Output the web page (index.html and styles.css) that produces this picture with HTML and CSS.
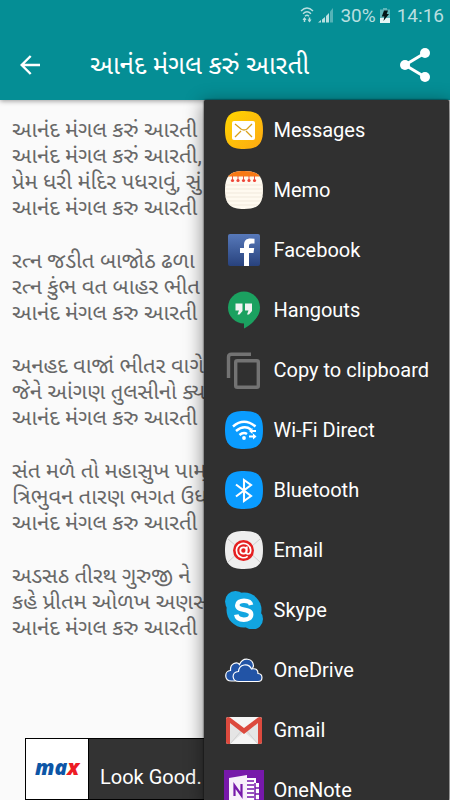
FILE: index.html
```html
<!DOCTYPE html>
<html lang="gu">
<head>
<meta charset="utf-8">
<meta name="viewport" content="width=device-width, initial-scale=1">
<title>આનંદ મંગલ કરું આરતી</title>
<link rel="stylesheet" href="styles.css">
</head>
<body>
<div class="app">
  <header class="top">
    <div class="status">
      <svg class="status-wifi" viewBox="0 0 14 18" width="14" height="18" fill="none" stroke="currentColor" stroke-width="1.4">
        <path d="M1 5Q7-.8 13 5M3 7.7Q7 4 11 7.7M5 10.2Q7 8.4 9 10.2"/>
        <path d="M4.500 16v-4M9.500 11.500v4" stroke-width="1.500"/>
        <path d="M2.500 14l2-3 2 3zM7.500 13.500l2 3 2-3z" fill="currentColor" stroke="none"/>
      </svg>
      <svg class="status-signal" viewBox="0 0 16 16" width="16" height="16">
        <path d="M0 15.500L3 13v2.500zM4 12.500l3-2.500v5.500H4zM8 9l3-3v9.500H8z" fill="currentColor"/>
        <path d="M12 4.500L15 1v14.500h-3z" fill="currentColor" opacity=".45"/>
      </svg>
      <span>30%</span>
      <svg class="status-battery" viewBox="0 0 10 15" width="10" height="15">
        <path d="M3 0h4v1.500h3V15H0V1.500h3z" fill="currentColor" opacity=".5"/>
        <path d="M0 10h10v5H0z" fill="#e5f6f5"/>
        <path d="M4 2.500h4L6.700 6H9l-5.500 7L4.400 8.500H1.800z" fill="#041516"/>
      </svg>
      <span>14:16</span>
    </div>
    <div class="toolbar">
      <button class="icon-button" type="button" aria-label="Back">
        <svg viewBox="0 0 20 20" width="20" height="20" fill="none" stroke="currentColor" stroke-width="2.400"><path d="M20 10H2M10.700 1L1.700 10l9 9"/></svg>
      </button>
      <h1>આનંદ મંગલ કરું આરતી</h1>
      <button class="icon-button" type="button" aria-label="Share">
        <svg viewBox="0 0 30 34" width="30" height="34"><path d="M25 5L5 17l20 12" fill="none" stroke="currentColor" stroke-width="3"/><g fill="currentColor"><circle cx="25" cy="5" r="5"/><circle cx="5" cy="17" r="5"/><circle cx="25" cy="29" r="5"/></g></svg>
      </button>
    </div>
  </header>
  <main class="lyrics">
    <p>આનંદ મંગલ કરું આરતી<br>આનંદ મંગલ કરું આરતી,<br>પ્રેમ ધરી મંદિર પધરાવું, સું<br>આનંદ મંગલ કરુ આરતી</p>
    <p>રત્ન જડીત બાજોઠ ઢળા<br>રત્ન કુંભ વત બાહર ભીત<br>આનંદ મંગલ કરુ આરતી</p>
    <p>અનહદ વાજાં ભીતર વાગે<br>જેને આંગણ તુલસીનો ક્ય<br>આનંદ મંગલ કરુ આરતી</p>
    <p>સંત મળે તો મહાસુખ પામ્<br>ત્રિભુવન તારણ ભગત ઉધ<br>આનંદ મંગલ કરુ આરતી</p>
    <p>અડસઠ તીરથ ગુરુજી ને<br>કહે પ્રીતમ ઓળખ અણસ<br>આનંદ મંગલ કરુ આરતી</p>
  </main>
  <a class="ad" href="#">
    <span class="ad-logo">ma<span class="ad-x">x</span></span>
    <span class="ad-text">Look Good.</span>
  </a>
  <ul class="menu">
    <li><button type="button">
      <svg viewBox="0 0 38 38"><defs><linearGradient id="amber" x2="1" y2="1"><stop stop-color="#ffd600"/><stop offset="1" stop-color="#fda813"/></linearGradient></defs><path d="M19 0C33 0 38 5 38 19S33 38 19 38 0 33 0 19 5 0 19 0z" fill="url(#amber)"/><rect x="7" y="10" width="23" height="19" rx="2" fill="#fff"/><path d="M10 13l6 5q3 2 6 0l5-5M10 26l6-6M27 26l-6-6" fill="none" stroke="#d9a11b" stroke-width="1.300"/></svg>
      Messages</button></li>
    <li><button type="button">
      <svg viewBox="0 0 38 38"><defs><clipPath id="tile"><path d="M19 0C33 0 38 5 38 19S33 38 19 38 0 33 0 19 5 0 19 0z"/></clipPath></defs><g clip-path="url(#tile)"><path fill="#fffaf0" d="M0 0h38v38H0z"/><path fill="#f77a16" d="M0 0h38v5.500H0z"/><path d="M0 14h38M0 18h38M0 22h38M0 26h38M0 30h38M0 34h38" stroke="#f1e9dc"/><path d="M7.500 5v5M13 5v5M18.500 5v5M24 5v5M29.500 5v5" stroke="#ed553f"/><g fill="#ee4638"><circle cx="7.500" cy="9.500" r="1.600"/><circle cx="13" cy="9.500" r="1.600"/><circle cx="18.500" cy="9.500" r="1.600"/><circle cx="24" cy="9.500" r="1.600"/><circle cx="29.500" cy="9.500" r="1.600"/></g></g></svg>
      Memo</button></li>
    <li><button type="button">
      <svg viewBox="0 0 38 38"><defs><linearGradient id="fb" x2="0" y2="1"><stop stop-color="#5779ba"/><stop offset="1" stop-color="#28427d"/></linearGradient></defs><rect x="3" y="3" width="32" height="32" rx="2" fill="url(#fb)"/><path d="M19 35V22h-4v-5h4v-3c0-4.500 2.500-6.500 6.500-6.500l4 .3v4.700h-2.700c-2 0-2.800.8-2.800 2.500v2h5.200l-.7 5H24v13z" fill="#fff"/></svg>
      Facebook</button></li>
    <li><button type="button">
      <svg viewBox="0 0 38 38"><circle cx="19" cy="16.500" r="16" fill="#1ba160"/><path d="M19 27v10.500c5-2 12-8 14.500-15z" fill="#1ba160"/><path d="M10.500 12.500h7v7.500l-3 3.500h-2l1.500-4h-3.500zM20 12.500h7V20l-3 3.500h-2l1.500-4H20z" fill="#f2f2f2"/></svg>
      Hangouts</button></li>
    <li><button type="button">
      <svg viewBox="0 0 38 38" fill="none" stroke="#737373" stroke-width="3.400"><path d="M26 3.200H6.500Q3.500 3.200 3.500 6v21"/><rect x="10.700" y="9.700" width="22.600" height="26.600" rx="1.500"/></svg>
      Copy to clipboard</button></li>
    <li><button type="button">
      <svg viewBox="0 0 38 38"><path d="M19 0C33 0 38 5 38 19S33 38 19 38 0 33 0 19 5 0 19 0z" fill="#0a9cff"/><path d="M8 15.500Q19 6 30.500 15.500M11 20Q19 13.500 26 18.500M14.500 24Q18.500 20.500 22 23" fill="none" stroke="#fff" stroke-width="2.500"/><circle cx="19" cy="27" r="1.900" fill="#fff"/><path d="M31 20h-6M24 25.500h6" stroke="#fff" stroke-width="1.900"/><path d="M27.500 17v6L24 20zM28 22.500v6l3.500-3z" fill="#fff"/></svg>
      Wi-Fi Direct</button></li>
    <li><button type="button">
      <svg viewBox="0 0 38 38"><path d="M19 0C33 0 38 5 38 19S33 38 19 38 0 33 0 19 5 0 19 0z" fill="#0a9cff"/><path d="M11 13.500l15 11.500-7 5V9l7 5-15 11.500" fill="none" stroke="#fff" stroke-width="2.100"/></svg>
      Bluetooth</button></li>
    <li><button type="button">
      <svg viewBox="0 0 38 38"><path d="M19 0C33 0 38 5 38 19S33 38 19 38 0 33 0 19 5 0 19 0z" fill="#eee"/><path d="M3 8l16 14L35 8M3 31l12-11M35 31L23 20" fill="none" stroke="#ccc"/><circle cx="18.500" cy="19.500" r="10.500" fill="#e51f20"/><circle cx="18.500" cy="19.500" r="3.200" fill="none" stroke="#fff" stroke-width="1.800"/><path d="M22 15.500l-.7 5q0 2.500 1.700 2.500c2 0 2.700-2 2.700-4a7.200 7.200 0 1 0-3 6.400" fill="none" stroke="#fff" stroke-width="1.700"/></svg>
      Email</button></li>
    <li><button type="button">
      <svg viewBox="0 0 38 38"><g fill="#12a5e0"><circle cx="19" cy="19" r="17.500"/><circle cx="10.500" cy="10.500" r="10.500"/><circle cx="27.500" cy="28" r="10.500"/></g><path d="M26 14c-.5-3-3.500-4.300-7-4.300-3.800 0-6.700 1.600-6.700 4.500 0 6.300 13.800 2.700 13.800 9.300 0 3.500-3.200 5.200-7.300 5.200-4.300 0-7-1.700-7.500-5" fill="none" stroke="#fff" stroke-width="4.600"/></svg>
      Skype</button></li>
    <li><button type="button">
      <svg viewBox="0 0 38 38" fill="#2254a6" stroke="#fff" stroke-width="1.200"><path d="M10 30H6.500C-1 30-1 20 5.500 19.500 5 12 12 10.500 14.500 13.500 18 5.500 28 7 28.500 15L24 26z"/><path d="M14 30.500c-7.500 0-8-9.500-.5-10C14 13 23.500 11.500 26.500 18c4.500-1 6.500 1 6.500 4.500 5.500.5 5 8 0 8z"/></svg>
      OneDrive</button></li>
    <li><button type="button">
      <svg viewBox="0 0 38 38"><rect x="1" y="6" width="36" height="27" rx="2" fill="#e5e5e5"/><path d="M5 33l14-12 14 12z" fill="#f5f5f5"/><path d="M5 33l12-14M33 33L21 19" stroke="#d2d2d2"/><path d="M3 6h32L19 20z" fill="#f5f5f5"/><path d="M1 8.500C1 5.500 4 5.500 5 6.500L19 17 33 6.500c1-1 4-1 4 2V31q0 2-2 2h-2V12L19 23 5 12v21H3q-2 0-2-2z" fill="#dc4a3e"/></svg>
      Gmail</button></li>
    <li><button type="button">
      <svg class="bleed" viewBox="0 0 38 38"><path d="M-1-1h40v40H-1z" fill="#7719aa"/><path d="M22 7h9v5h3v22H22z" fill="#fff"/><path d="M22 10h7M22 14h7M22 18h7M22 22h7M22 26h7M22 30h7M30 12v22M30 17h4M30 23h4M30 29h4" stroke="#7719aa" stroke-width="1.500"/><path d="M4 7l18-3v33L4 34z" fill="#f7effa"/><path d="M9.500 25V14.500l7 10V13" fill="none" stroke="#7719aa" stroke-width="2.200"/></svg>
      OneNote</button></li>
  </ul>
</div>
</body>
</html>
```

FILE: styles.css
```css
* {
  box-sizing: border-box;
}

body {
  margin: 0;
  font-family: Roboto, "Noto Sans Gujarati", "Noto Sans", sans-serif;
}

button {
  border: 0;
  background: none;
  color: inherit;
  font: inherit;
  cursor: pointer;
}

.app {
  position: relative;
  display: flex;
  flex-direction: column;
  height: 100vh;
  overflow: hidden;
  background: #fafafa;
}

.top {
  flex: none;
  background: #058e95;
  color: #fff;
  box-shadow: 0 1px 5px rgba(0, 0, 0, 0.4);
}

.status {
  display: flex;
  align-items: center;
  justify-content: flex-end;
  gap: 4px;
  height: 30px;
  padding: 0 6px;
  color: #b9dfe0;
  font-size: 19px;
}

.status-signal {
  margin-right: 2px;
}

.status-battery {
  margin-right: 3px;
}

.toolbar {
  display: flex;
  align-items: center;
  height: 70px;
  padding: 0 20px;
}

.toolbar h1 {
  flex: 1;
  margin: 0 0 0 50px;
  font-size: 26px;
  font-weight: 400;
  line-height: 32px;
  white-space: nowrap;
}

.icon-button {
  display: flex;
  padding: 0;
}

.lyrics {
  flex: 1;
  min-height: 0;
  padding: 17px 12px 0;
  color: #686868;
  font-size: 22px;
  line-height: 26px;
  white-space: nowrap;
}

.lyrics p {
  margin: 0 0 27px;
}

.ad {
  flex: none;
  display: flex;
  height: 62px;
  margin: 0 25px;
  border: 1px solid #000;
  background: #333;
  color: #fff;
  text-decoration: none;
}

.ad-logo {
  display: flex;
  align-items: center;
  justify-content: center;
  width: 63px;
  padding-bottom: 4px;
  border-right: 1px solid #000;
  background: #fff;
  color: #0d56a6;
  font-family: "Open Sans", sans-serif;
  font-size: 21px;
  font-style: italic;
  font-weight: 800;
}

.ad-x {
  color: #ed1c24;
}

.ad-text {
  align-self: flex-end;
  padding: 0 11px 10px;
  font-size: 20px;
  line-height: 24px;
}

.menu {
  position: absolute;
  top: 100px;
  right: 1px;
  bottom: 0;
  margin: 0;
  padding: 0;
  overflow: hidden;
  list-style: none;
  border-radius: 2px 2px 0 0;
  background: #303030;
  color: #fff;
  font-size: 20px;
  box-shadow: 0 4px 18px 2px rgba(0, 0, 0, 0.4), 0 0 2px #000;
}

.menu button {
  display: flex;
  align-items: center;
  gap: 11px;
  width: 100%;
  height: 60px;
  padding: 0 20px 0 21px;
  text-align: left;
}

.menu svg {
  flex: none;
  width: 38px;
  height: 38px;
}

.menu .bleed {
  overflow: visible;
}
```
